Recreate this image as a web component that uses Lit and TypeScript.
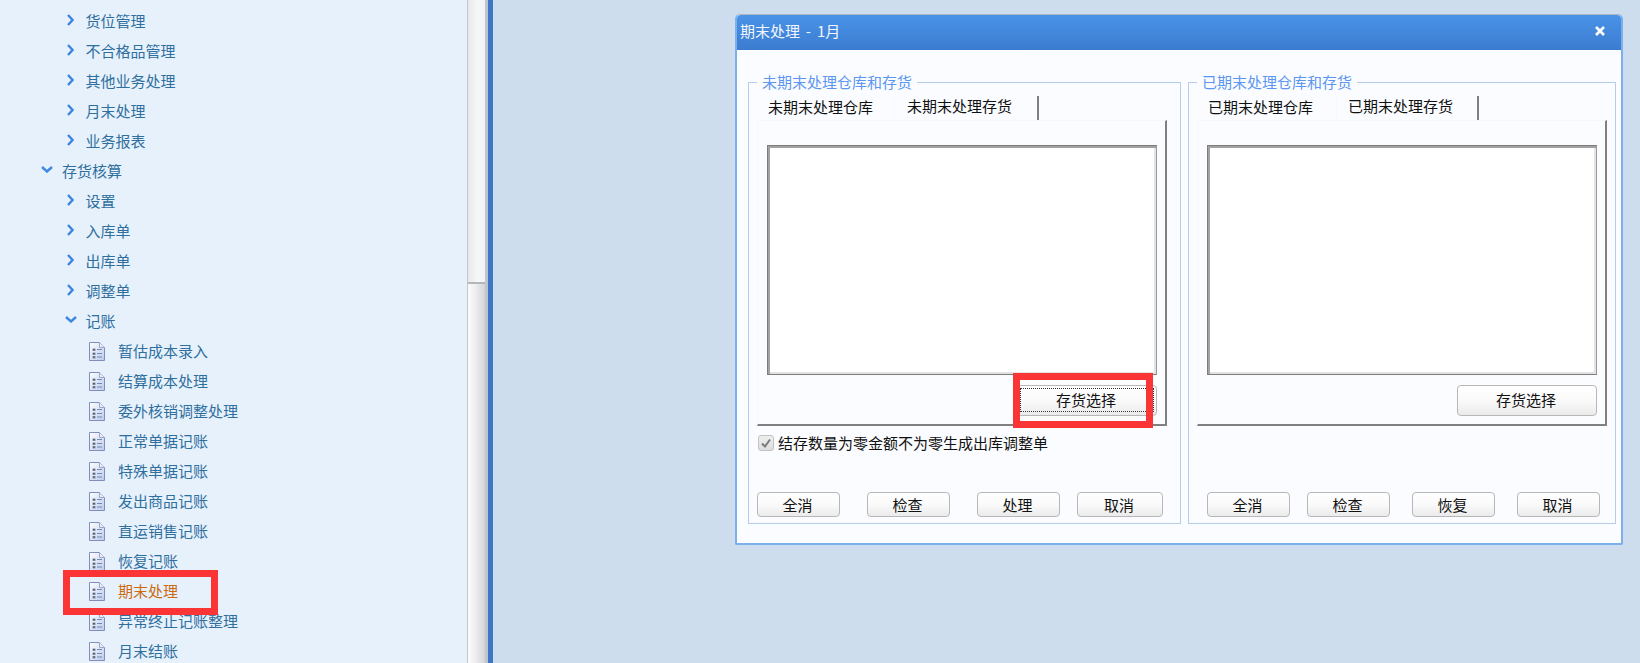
import { LitElement, html, css, svg } from "lit";
import { customElement } from "lit/decorators.js";

type Row = { t: string; l: 1 | 2 | 3; open?: boolean; active?: boolean };

const rows: Row[] = [
  { t: "货位管理", l: 2 },
  { t: "不合格品管理", l: 2 },
  { t: "其他业务处理", l: 2 },
  { t: "月末处理", l: 2 },
  { t: "业务报表", l: 2 },
  { t: "存货核算", l: 1, open: true },
  { t: "设置", l: 2 },
  { t: "入库单", l: 2 },
  { t: "出库单", l: 2 },
  { t: "调整单", l: 2 },
  { t: "记账", l: 2, open: true },
  { t: "暂估成本录入", l: 3 },
  { t: "结算成本处理", l: 3 },
  { t: "委外核销调整处理", l: 3 },
  { t: "正常单据记账", l: 3 },
  { t: "特殊单据记账", l: 3 },
  { t: "发出商品记账", l: 3 },
  { t: "直运销售记账", l: 3 },
  { t: "恢复记账", l: 3 },
  { t: "期末处理", l: 3, active: true },
  { t: "异常终止记账整理", l: 3 },
  { t: "月末结账", l: 3 },
];

const chevronRight = svg`<svg class="chev r" width="7" height="12" viewBox="0 0 7 12"><path d="M1 1l4.5 5L1 11" fill="none" stroke="#3f86e0" stroke-width="2.4"/></svg>`;
const chevronDown = svg`<svg class="chev d" width="12" height="7" viewBox="0 0 12 7"><path d="M1 1l5 4.5L11 1" fill="none" stroke="#3f86e0" stroke-width="2.4"/></svg>`;
const doc = svg`<svg class="doc" width="16" height="19" viewBox="0 0 16 19">
  <defs><linearGradient id="pg" x1="0" y1="0" x2="1" y2="1"><stop offset="0" stop-color="#ffffff"/><stop offset="1" stop-color="#bccaea"/></linearGradient></defs>
  <path d="M.5.5H10.500L15.500 5.500V18.500H.5z" fill="url(#pg)" stroke="#7f8fbd"/>
  <path d="M10.500.5V5.500h5" fill="#e9eef8" stroke="#9aa7cb"/>
  <path d="M3.500 6.500h3v2.500h-3zM3.500 10.500h3v2.500h-3zM3.500 14h3v2.500h-3z" fill="#8c95a8"/>
  <path d="M4.300 7.700h1.400M4.300 11.700h1.400M4.300 15.200h1.400" stroke="#3d4658" stroke-width="1.200"/>
  <path d="M8 7.500h5M8 11.500h5M8 15h5" stroke="#6f88bd"/>
</svg>`;

@customElement("app-root")
export class AppRoot extends LitElement {
  static styles = css`
    :host {
      display: flex;
      width: 1640px;
      height: 663px;
      overflow: hidden;
      position: relative;
      font-family: "Noto Sans CJK SC", "Noto Sans", sans-serif;
      font-size: 15px;
      line-height: 20px;
      color: #111;
      background: #cddded;
    }
    .side {
      width: 467px;
      flex: none;
      background: #e6f1fb;
      padding-top: 6px;
      box-sizing: border-box;
      height: 663px;
      overflow: hidden;
    }
    .row {
      height: 30px;
      display: flex;
      align-items: center;
      color: #2f6f9f;
      white-space: nowrap;
      position: relative;
    }
    .row.active { color: #cc6a10; }
    .row.l1 { padding-left: 62px; }
    .row.l2 { padding-left: 85.500px; }
    .row.l3 { padding-left: 118px; }
    .chev { position: absolute; }
    .chev.r { left: 67px; top: 8px; }
    .chev.d { top: 10px; }
    .row.l1 .chev.d { left: 41px; }
    .row.l2 .chev.d { left: 65px; }
    .doc { position: absolute; left: 89px; top: 6px; }
    .scroll {
      width: 19px;
      flex: none;
      box-sizing: border-box;
      border-left: 1px solid #c4c7ca;
      border-right: 1px solid #c4c7ca;
      display: flex;
      flex-direction: column;
      background: linear-gradient(90deg, #e6e8ea, #f6f7f8 60%, #f2f3f4);
    }
    .track { height: 282px; flex: none; }
    .thumb {
      flex: 1;
      border-top: 2px solid #b4b6b9;
      background: linear-gradient(90deg, #fafafa, #f0f0f2 40%, #d2d2da);
    }
    .split { width: 2px; flex: none; background: #bcc5ce; }
    .bar { width: 5px; flex: none; background: #3c76c4; }
    .main { flex: 1; padding: 14px 0 0 242px; }
    .dialog {
      width: 888px;
      height: 531px;
      box-sizing: border-box;
      background: #fbfcff;
      border: 2px solid #7cb0ec;
      border-top: 1px solid #a9b6c4;
      border-radius: 5px 5px 2px 2px;
      display: flex;
      flex-direction: column;
    }
    .title {
      height: 35px;
      flex: none;
      display: flex;
      align-items: center;
      justify-content: space-between;
      padding: 0 16px 3px 3px;
      box-sizing: border-box;
      background: linear-gradient(#4a93e8, #3b7ccf);
      color: #f2f7fd;
      border-radius: 4px 4px 0 0;
      word-spacing: 2.500px;
    }
    .body {
      display: flex;
      gap: 7px;
      padding: 32px 0 0 11px;
    }
    .group {
      position: relative;
      height: 442px;
      box-sizing: border-box;
      border: 1px solid #b5cde8;
      padding: 13px 0 0 8px;
      display: flex;
      flex-direction: column;
    }
    .group.a { width: 433px; }
    .group.b { width: 428px; }
    .legend {
      position: absolute;
      left: 8px;
      top: -11px;
      padding: 0 5px;
      background: #fbfcff;
      color: #5b96f0;
    }
    .tabs { display: flex; height: 24px; flex: none; }
    .tab { box-sizing: border-box; padding: 1px 0 0 11px; width: 138px; }
    .group.b .tab.first { width: 140px; }
    .tab.first { border-right: 1px solid #f6f8fc; }
    .tab.on {
      width: 144px;
      padding-top: 0;
      padding-left: 12px;
      border-right: 2px solid #808080;
    }
    .group.b .tab.on { width: 142px; padding-left: 11px; }
    .pane {
      box-sizing: border-box;
      width: 410px;
      height: 306px;
      flex: none;
      border-left: 1px solid #f6f8fc;
      border-top: 1px solid #f6f8fc;
      border-right: 2px solid #808080;
      border-bottom: 2px solid #808080;
      padding: 24px 8px 0 9px;
      display: flex;
      flex-direction: column;
      align-items: flex-end;
    }
    .list {
      box-sizing: border-box;
      width: 390px;
      height: 230px;
      flex: none;
      background: #fff;
      border: 1px solid #7c7c7c;
      border-right-color: #9a9a9a;
      box-shadow: inset 2px 2px 0 #a2a2a2, inset -2px -2px 0 #e2e2e2;
    }
    .btn {
      box-sizing: border-box;
      border: 1px solid #b7b7b7;
      border-radius: 4px;
      background: linear-gradient(#ffffff, #fafafa 50%, #ebebeb);
      display: flex;
      align-items: center;
      justify-content: center;
      color: #111;
      padding-right: 2px;
    }
    .pick {
      width: 140px;
      height: 31px;
      margin-top: 10px;
      position: relative;
      padding-bottom: 2px;
    }
    .focus {
      position: absolute;
      inset: 2px 2px 3px 2px;
      border: 1px dotted #333;
    }
    .check {
      display: flex;
      align-items: center;
      gap: 4px;
      margin: 7px 0 0 1px;
    }
    .box {
      box-sizing: border-box;
      width: 16px;
      height: 16px;
      border: 1px solid #c2c2c2;
      border-radius: 3px;
      background: linear-gradient(#eeeeee, #dddddd);
      display: flex;
      align-items: center;
      justify-content: center;
    }
    .foot {
      margin-top: auto;
      margin-bottom: 6px;
      display: grid;
      height: 25px;
    }
    .foot.a { grid-template-columns: 110px 110px 100px 86px; }
    .foot.b { grid-template-columns: 100px 105px 105px 83px; margin-left: 10px; }
    .foot .btn { width: 83px; height: 25px; }
    .foot.a .btn:last-child { width: 86px; }
    .mark {
      position: absolute;
      box-sizing: border-box;
      border: 7px solid #fb3535;
    }
    .mark.m1 { left: 63px; top: 570px; width: 155px; height: 45px; }
    .mark.m2 { left: 1013px; top: 373px; width: 140px; height: 55px; }
  `;

  private renderRow(r: Row) {
    let icon: unknown = chevronRight;
    if (r.l === 3) icon = doc;
    else if (r.open) icon = chevronDown;
    return html`<div class="row l${r.l} ${r.active ? "active" : ""}">${icon}<span>${r.t}</span></div>`;
  }

  private renderGroup(
    cls: string,
    legend: string,
    tab1: string,
    tab2: string,
    focused: boolean,
    checked: boolean,
    buttons: string[]
  ) {
    return html`<div class="group ${cls}">
      <div class="legend">${legend}</div>
      <div class="tabs">
        <div class="tab first">${tab1}</div>
        <div class="tab on">${tab2}</div>
      </div>
      <div class="pane">
        <div class="list"></div>
        <div class="btn pick">存货选择${focused ? html`<div class="focus"></div>` : ""}</div>
      </div>
      ${checked
        ? html`<div class="check">
            <span class="box"
              ><svg width="12" height="12" viewBox="0 0 12 12">
                <path d="M2 6.500l3 3 5-7" fill="none" stroke="#7a7a7a" stroke-width="2" /></svg
            ></span>
            <span>结存数量为零金额不为零生成出库调整单</span>
          </div>`
        : ""}
      <div class="foot ${cls}">${buttons.map((b) => html`<div class="btn">${b}</div>`)}</div>
    </div>`;
  }

  render() {
    return html`
      <div class="side">${rows.map((r) => this.renderRow(r))}</div>
      <div class="scroll"><div class="track"></div><div class="thumb"></div></div>
      <div class="split"></div>
      <div class="bar"></div>
      <div class="main">
        <div class="dialog">
          <div class="title">
            <span>期末处理 - 1月</span>
            <svg width="10" height="10" viewBox="0 0 10 10">
              <path d="M1 1l8 8M9 1l-8 8" stroke="#fff" stroke-width="2.600" />
            </svg>
          </div>
          <div class="body">
            ${this.renderGroup("a", "未期末处理仓库和存货", "未期末处理仓库", "未期末处理存货", true, true, ["全消", "检查", "处理", "取消"])}
            ${this.renderGroup("b", "已期末处理仓库和存货", "已期末处理仓库", "已期末处理存货", false, false, ["全消", "检查", "恢复", "取消"])}
          </div>
        </div>
      </div>
      <div class="mark m1"></div>
      <div class="mark m2"></div>
    `;
  }
}
